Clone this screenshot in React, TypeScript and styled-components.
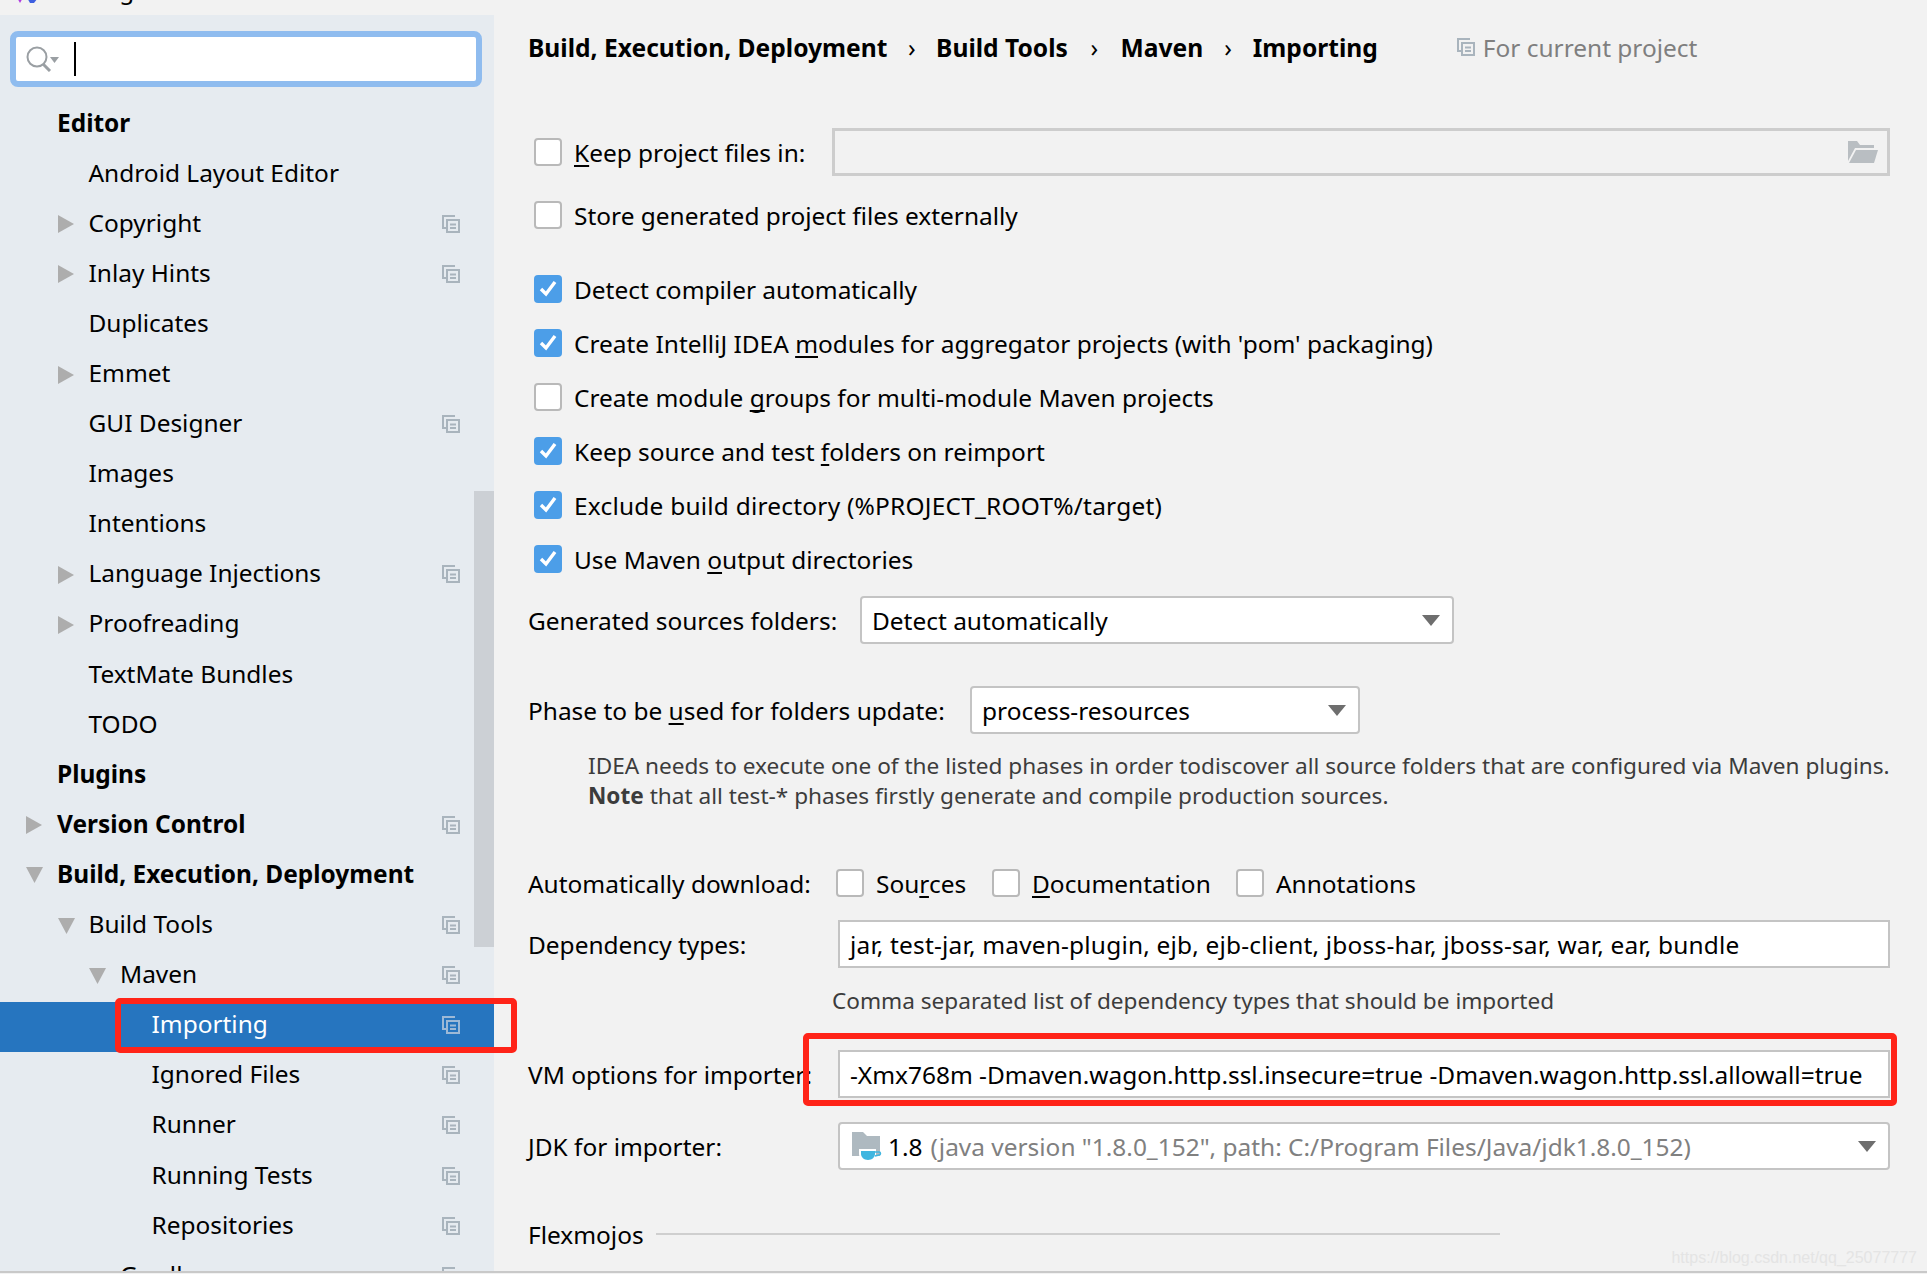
import React from "react";
import styled, { createGlobalStyle } from "styled-components";

const GlobalStyle = createGlobalStyle`
    html, body { margin: 0; padding: 0; background: #f2f2f2; }
    body { font-family: "Noto Sans", "Open Sans", sans-serif; font-size: 24.450px; color: #000; }
`;

type TreeItem = { label: string; depth: number; bold?: boolean; arrow?: "right" | "down"; copy?: boolean; selected?: boolean };

const tree: TreeItem[] = [
    { label: "Editor", depth: 0, bold: true },
    { label: "Android Layout Editor", depth: 1 },
    { label: "Copyright", depth: 1, arrow: "right", copy: true },
    { label: "Inlay Hints", depth: 1, arrow: "right", copy: true },
    { label: "Duplicates", depth: 1 },
    { label: "Emmet", depth: 1, arrow: "right" },
    { label: "GUI Designer", depth: 1, copy: true },
    { label: "Images", depth: 1 },
    { label: "Intentions", depth: 1 },
    { label: "Language Injections", depth: 1, arrow: "right", copy: true },
    { label: "Proofreading", depth: 1, arrow: "right" },
    { label: "TextMate Bundles", depth: 1 },
    { label: "TODO", depth: 1 },
    { label: "Plugins", depth: 0, bold: true },
    { label: "Version Control", depth: 0, bold: true, arrow: "right", copy: true },
    { label: "Build, Execution, Deployment", depth: 0, bold: true, arrow: "down" },
    { label: "Build Tools", depth: 1, arrow: "down", copy: true },
    { label: "Maven", depth: 2, arrow: "down", copy: true },
    { label: "Importing", depth: 3, copy: true, selected: true },
    { label: "Ignored Files", depth: 3, copy: true },
    { label: "Runner", depth: 3, copy: true },
    { label: "Running Tests", depth: 3, copy: true },
    { label: "Repositories", depth: 3, copy: true },
    { label: "Gradle", depth: 2, copy: true },
];

const CopyIcon = ({ size = 18 }: { size?: number }) => (
    <svg width={size} height={size} viewBox="0 0 18 18" fill="none" stroke="currentColor" strokeWidth="2">
        <path d="M13 1H1v12h3" />
        <rect x="5" y="5" width="12" height="12" />
        <path d="M8 9.500h6M8 13h6" />
    </svg>
);

const Arrow = ({ dir }: { dir: "right" | "down" }) => (
    <svg width="17" height="18" viewBox="0 0 17 18" fill="#adadad">
        {dir === "right" ? <path d="M0 0l16 9-16 9z" /> : <path d="M0 1h17l-8.500 16z" />}
    </svg>
);

const Check = ({ on }: { on?: boolean }) => (
    <CheckBox $on={on}>
        {on && (
            <svg width="18" height="16" viewBox="0 0 18 16" fill="none" stroke="#fff" strokeWidth="3.400">
                <path d="M2 8l5 5 9-12" />
            </svg>
        )}
    </CheckBox>
);

const SelectArrow = () => (
    <svg width="18" height="11" viewBox="0 0 18 11" fill="#6e6e6e"><path d="M0 0h18l-9 11z" /></svg>
);

export default function App() {
    return (
        <Page>
            <GlobalStyle />
            <TitleStrip>
                <svg width="26" height="15" viewBox="0 0 26 15">
                    <path d="M0-6h10L5 3z" fill="#b03ae0" />
                    <path d="M10-6h16l-7 9-4 0z" fill="#3d5fe0" />
                </svg>
                <TitleText>Settings</TitleText>
            </TitleStrip>
            <Body>
                <Sidebar>
                    <SearchBox>
                        <svg width="34" height="26" viewBox="0 0 34 26" fill="none" stroke="#9a9fa3" strokeWidth="2">
                            <circle cx="11" cy="11" r="9.500" />
                            <path d="M17 18l7 7" strokeWidth="3" />
                            <path d="M24 11h9l-4.500 6z" fill="#9a9fa3" stroke="none" />
                        </svg>
                        <Caret />
                    </SearchBox>
                    <Tree>
                        {tree.map((item) => (
                            <TreeRow key={item.label} $depth={item.depth} $selected={item.selected}>
                                <ArrowSlot>{item.arrow && <Arrow dir={item.arrow} />}</ArrowSlot>
                                <TreeLabel $bold={item.bold}>{item.label}</TreeLabel>
                                {item.copy && (
                                    <CopySlot $selected={item.selected}>
                                        <CopyIcon />
                                    </CopySlot>
                                )}
                            </TreeRow>
                        ))}
                    </Tree>
                    <ScrollThumb />
                </Sidebar>

                <Main>
                    <Breadcrumb>
                        <Crumb>Build, Execution, Deployment</Crumb>
                        <Sep $gap={20.5}>›</Sep>
                        <Crumb>Build Tools</Crumb>
                        <Sep $gap={22.5}>›</Sep>
                        <Crumb>Maven</Crumb>
                        <Sep $gap={21}>›</Sep>
                        <Crumb>Importing</Crumb>
                        <Scope>
                            <CopyIcon />
                            For current project
                        </Scope>
                    </Breadcrumb>

                    <FormRow $mt={49} $h={48} $indent={6}>
                        <Check />
                        <CheckLabel $w={258}><U>K</U>eep project files in:</CheckLabel>
                        <ReadonlyField>
                            <svg width="30" height="22" viewBox="0 0 30 22" fill="#b9bec2">
                                <path d="M0 0h9l3 4h14v3H7L0 20z" />
                                <path d="M8 9h22l-4 13H1z" />
                            </svg>
                        </ReadonlyField>
                    </FormRow>

                    <FormRow $mt={19} $h={40} $indent={6}>
                        <Check />
                        <CheckLabel>Store generated project files externally</CheckLabel>
                    </FormRow>

                    <CheckList>
                        <CheckRow><Check on /><CheckLabel>Detect compiler automatically</CheckLabel></CheckRow>
                        <CheckRow><Check on /><CheckLabel>Create IntelliJ IDEA <U>m</U>odules for aggregator projects (with 'pom' packaging)</CheckLabel></CheckRow>
                        <CheckRow><Check /><CheckLabel>Create module <U>g</U>roups for multi-module Maven projects</CheckLabel></CheckRow>
                        <CheckRow><Check on /><CheckLabel>Keep source and test <U>f</U>olders on reimport</CheckLabel></CheckRow>
                        <CheckRow><Check on /><CheckLabel $track={0.23}>Exclude build directory (%PROJECT_ROOT%/target)</CheckLabel></CheckRow>
                        <CheckRow><Check on /><CheckLabel>Use Maven <U>o</U>utput directories</CheckLabel></CheckRow>
                    </CheckList>

                    <FormRow $mt={10} $h={48}>
                        <FieldLabel $w={332}>Generated sources folders:</FieldLabel>
                        <SelectBox $w={594}>Detect automatically<SelectArrow /></SelectBox>
                    </FormRow>

                    <FormRow $mt={42} $h={48}>
                        <FieldLabel $w={442}>Phase to be <U>u</U>sed for folders update:</FieldLabel>
                        <SelectBox $w={390}>process-resources<SelectArrow /></SelectBox>
                    </FormRow>

                    <Description>
                        IDEA needs to execute one of the listed phases in order todiscover all source folders that are configured via Maven plugins.<br />
                        <strong>Note</strong> that all test-* phases firstly generate and compile production sources.
                    </Description>

                    <FormRow $mt={52} $h={40}>
                        <FieldLabel $w={308}>Automatically download:</FieldLabel>
                        <Check />
                        <CheckLabel $w={116}>Sou<U>r</U>ces</CheckLabel>
                        <Check />
                        <CheckLabel $w={204}><U>D</U>ocumentation</CheckLabel>
                        <Check />
                        <CheckLabel>Annotations</CheckLabel>
                    </FormRow>

                    <FormRow $mt={17} $h={48}>
                        <FieldLabel $w={310}>Dependency types:</FieldLabel>
                        <TextField $track={0.2}>jar, test-jar, maven-plugin, ejb, ejb-client, jboss-har, jboss-sar, war, ear, bundle</TextField>
                    </FormRow>

                    <Hint>Comma separated list of dependency types that should be imported</Hint>

                    <FormRow $mt={34} $h={48}>
                        <FieldLabel $w={310}>VM options for importer:</FieldLabel>
                        <TextField>-Xmx768m -Dmaven.wagon.http.ssl.insecure=true -Dmaven.wagon.http.ssl.allowall=true</TextField>
                    </FormRow>

                    <FormRow $mt={24} $h={48}>
                        <FieldLabel $w={310}>JDK for importer:</FieldLabel>
                        <JdkSelect>
                            <svg width="30" height="28" viewBox="0 0 30 28">
                                <path d="M0 0h11l4 4h13v20H0z" fill="#aeb9c0" />
                                <path d="M7 17h17v5c0 4-4 6-8 6s-9-2-9-6z" fill="#fff" />
                                <path d="M9 19h14v3c0 3-3 6-7 6s-7-3-7-6z" fill="#40b6e0" />
                                <path d="M23 20h4c2 0 2 3 0 3l-4 1" fill="none" stroke="#40b6e0" strokeWidth="1.500" />
                            </svg>
                            <JdkVersion>1.8</JdkVersion>
                            <JdkPath>(java version "1.8.0_152", path: C:/Program Files/Java/jdk1.8.0_152)</JdkPath>
                            <SelectArrow />
                        </JdkSelect>
                    </FormRow>

                    <SectionRow>
                        Flexmojos
                        <SectionLine />
                    </SectionRow>
                </Main>

                <RedMark $left={115} $top={983} $width={402} $height={55} />
                <RedMark $left={803} $top={1018} $width={1094} $height={73} />
                <Watermark>https://blog.csdn.net/qq_25077777</Watermark>
            </Body>
            <BottomEdge />
        </Page>
    );
}

const Page = styled.div`
    width: 1927px;
    height: 1274px;
    overflow: hidden;
    background: #f2f2f2;
    display: flex;
    flex-direction: column;
`;

const TitleStrip = styled.div`
    height: 15px;
    flex: none;
    padding-left: 15px;
    display: flex;
    gap: 12px;
    overflow: hidden;
`;

const TitleText = styled.div`
    margin-top: -27px;
    line-height: 34px;
    height: 34px;
`;

const Body = styled.div`
    position: relative;
    height: 1256px;
    flex: none;
    display: flex;
`;

const Sidebar = styled.div`
    position: relative;
    width: 494px;
    flex: none;
    background: #e6ebf0;
    overflow: hidden;
`;

const SearchBox = styled.div`
    box-sizing: border-box;
    margin: 16px 0 0 10px;
    width: 472px;
    height: 56px;
    padding: 0 10px;
    display: flex;
    align-items: center;
    background: #fff;
    border: 6px solid #8fbcef;
    border-radius: 8px;
`;

const Caret = styled.div`
    width: 2px;
    height: 34px;
    margin-left: 14px;
    background: #000;
`;

const Tree = styled.div`
    margin-top: 13px;
`;

const TreeRow = styled.div<{ $depth: number; $selected?: boolean }>`
    height: 50.100px;
    display: flex;
    align-items: center;
    padding-left: ${(p) => 26 + p.$depth * 31.500}px;
    background: ${(p) => (p.$selected ? "#2675bf" : "transparent")};
    color: ${(p) => (p.$selected ? "#fff" : "#000")};
`;

const ArrowSlot = styled.div`
    width: 31px;
    flex: none;
    display: flex;
    align-items: center;
    margin-bottom: 2px;
`;

const TreeLabel = styled.span<{ $bold?: boolean }>`
    padding-bottom: 6px;
    font-weight: ${(p) => (p.$bold ? 700 : 400)};
`;

const CopySlot = styled.div<{ $selected?: boolean }>`
    margin: 0 34px 3px auto;
    display: flex;
    color: ${(p) => (p.$selected ? "#9db9d6" : "#a9b4bd")};
`;

const ScrollThumb = styled.div`
    position: absolute;
    right: 0;
    top: 476px;
    width: 20px;
    height: 456px;
    background: #ccd0d5;
`;

const RedMark = styled.div<{ $left: number; $top: number; $width: number; $height: number }>`
    position: absolute;
    box-sizing: border-box;
    left: ${(p) => p.$left}px;
    top: ${(p) => p.$top}px;
    width: ${(p) => p.$width}px;
    height: ${(p) => p.$height}px;
    border: 6px solid #ff2419;
    border-radius: 5px;
    z-index: 3;
`;

const Main = styled.div`
    box-sizing: border-box;
    width: 1433px;
    flex: none;
    padding: 0 37px 0 34px;
`;

const Breadcrumb = styled.div`
    height: 64px;
    margin-bottom: 2px;
    display: flex;
    align-items: center;
    font-weight: 700;
    font-size: 24.600px;
`;

const Crumb = styled.span``;

const Sep = styled.span<{ $gap: number }>`
    font-weight: 400;
    margin: 0 ${(p) => p.$gap}px;
`;

const Scope = styled.span`
    margin-left: 79px;
    display: flex;
    align-items: center;
    gap: 8px;
    font-weight: 400;
    font-size: 24.450px;
    color: #7f7f7f;
    svg { color: #a9b4bd; }
`;

const FormRow = styled.div<{ $mt: number; $h: number; $indent?: number }>`
    margin-top: ${(p) => p.$mt}px;
    height: ${(p) => p.$h}px;
    padding-left: ${(p) => p.$indent ?? 0}px;
    display: flex;
    align-items: center;
`;

const CheckList = styled.div`
    margin-top: 27px;
    padding-left: 6px;
`;

const CheckRow = styled.div`
    height: 54px;
    display: flex;
    align-items: center;
`;

const CheckBox = styled.span<{ $on?: boolean }>`
    box-sizing: border-box;
    width: 28px;
    height: 28px;
    flex: none;
    display: flex;
    align-items: center;
    justify-content: center;
    border-radius: 4px;
    background: ${(p) => (p.$on ? "#4c9ee8" : "#fff")};
    border: ${(p) => (p.$on ? "none" : "2px solid #b9b9b9")};
`;

const CheckLabel = styled.span<{ $w?: number; $track?: number }>`
    margin-left: 12px;
    white-space: nowrap;
    flex: none;
    letter-spacing: ${(p) => p.$track ?? 0}px;
    ${(p) => (p.$w ? `width: ${p.$w}px;` : "")}
`;

const U = styled.span`
    text-decoration: underline;
    text-decoration-skip-ink: none;
    text-underline-offset: 3px;
`;

const FieldLabel = styled.span<{ $w: number }>`
    width: ${(p) => p.$w}px;
    flex: none;
    white-space: nowrap;
`;

const ReadonlyField = styled.div`
    box-sizing: border-box;
    flex: 1;
    height: 48px;
    padding-right: 9px;
    display: flex;
    align-items: center;
    justify-content: flex-end;
    border: 3px solid #cdcdcd;
`;

const SelectBox = styled.div<{ $w: number }>`
    box-sizing: border-box;
    width: ${(p) => p.$w}px;
    height: 48px;
    padding: 0 12px 0 10px;
    display: flex;
    align-items: center;
    justify-content: space-between;
    background: #fff;
    border: 2px solid #c4c4c4;
    border-radius: 4px;
`;

const TextField = styled.div<{ $track?: number }>`
    box-sizing: border-box;
    flex: 1;
    height: 48px;
    padding: 0 10px;
    display: flex;
    align-items: center;
    white-space: nowrap;
    letter-spacing: ${(p) => p.$track ?? 0}px;
    background: #fff;
    border: 2px solid #c4c4c4;
`;

const JdkSelect = styled(TextField)`
    padding: 0 12px;
    border-radius: 4px;
`;

const JdkVersion = styled.span`
    margin-left: 6px;
`;

const JdkPath = styled.span`
    margin-left: 8px;
    flex: 1;
    color: #808080;
`;

const Description = styled.div`
    margin: 17px 0 0 60px;
    height: 60px;
    line-height: 30px;
    font-size: 22.600px;
    white-space: nowrap;
    color: #3c3c3c;
    strong { font-weight: 700; }
`;

const Hint = styled.div`
    margin: 18px 0 0 304px;
    height: 30px;
    line-height: 30px;
    font-size: 22.600px;
    color: #3c3c3c;
`;

const SectionRow = styled.div`
    margin-top: 44px;
    height: 40px;
    display: flex;
    align-items: center;
    gap: 12px;
`;

const SectionLine = styled.div`
    width: 844px;
    height: 2px;
    background: #cfcfcf;
`;

const Watermark = styled.div`
    position: absolute;
    right: 10px;
    bottom: 4px;
    font-family: "Liberation Sans", sans-serif;
    font-size: 16px;
    color: #e4e4e4;
    white-space: nowrap;
`;

const BottomEdge = styled.div`
    height: 2px;
    flex: none;
    background: #c9c9c9;
`;
